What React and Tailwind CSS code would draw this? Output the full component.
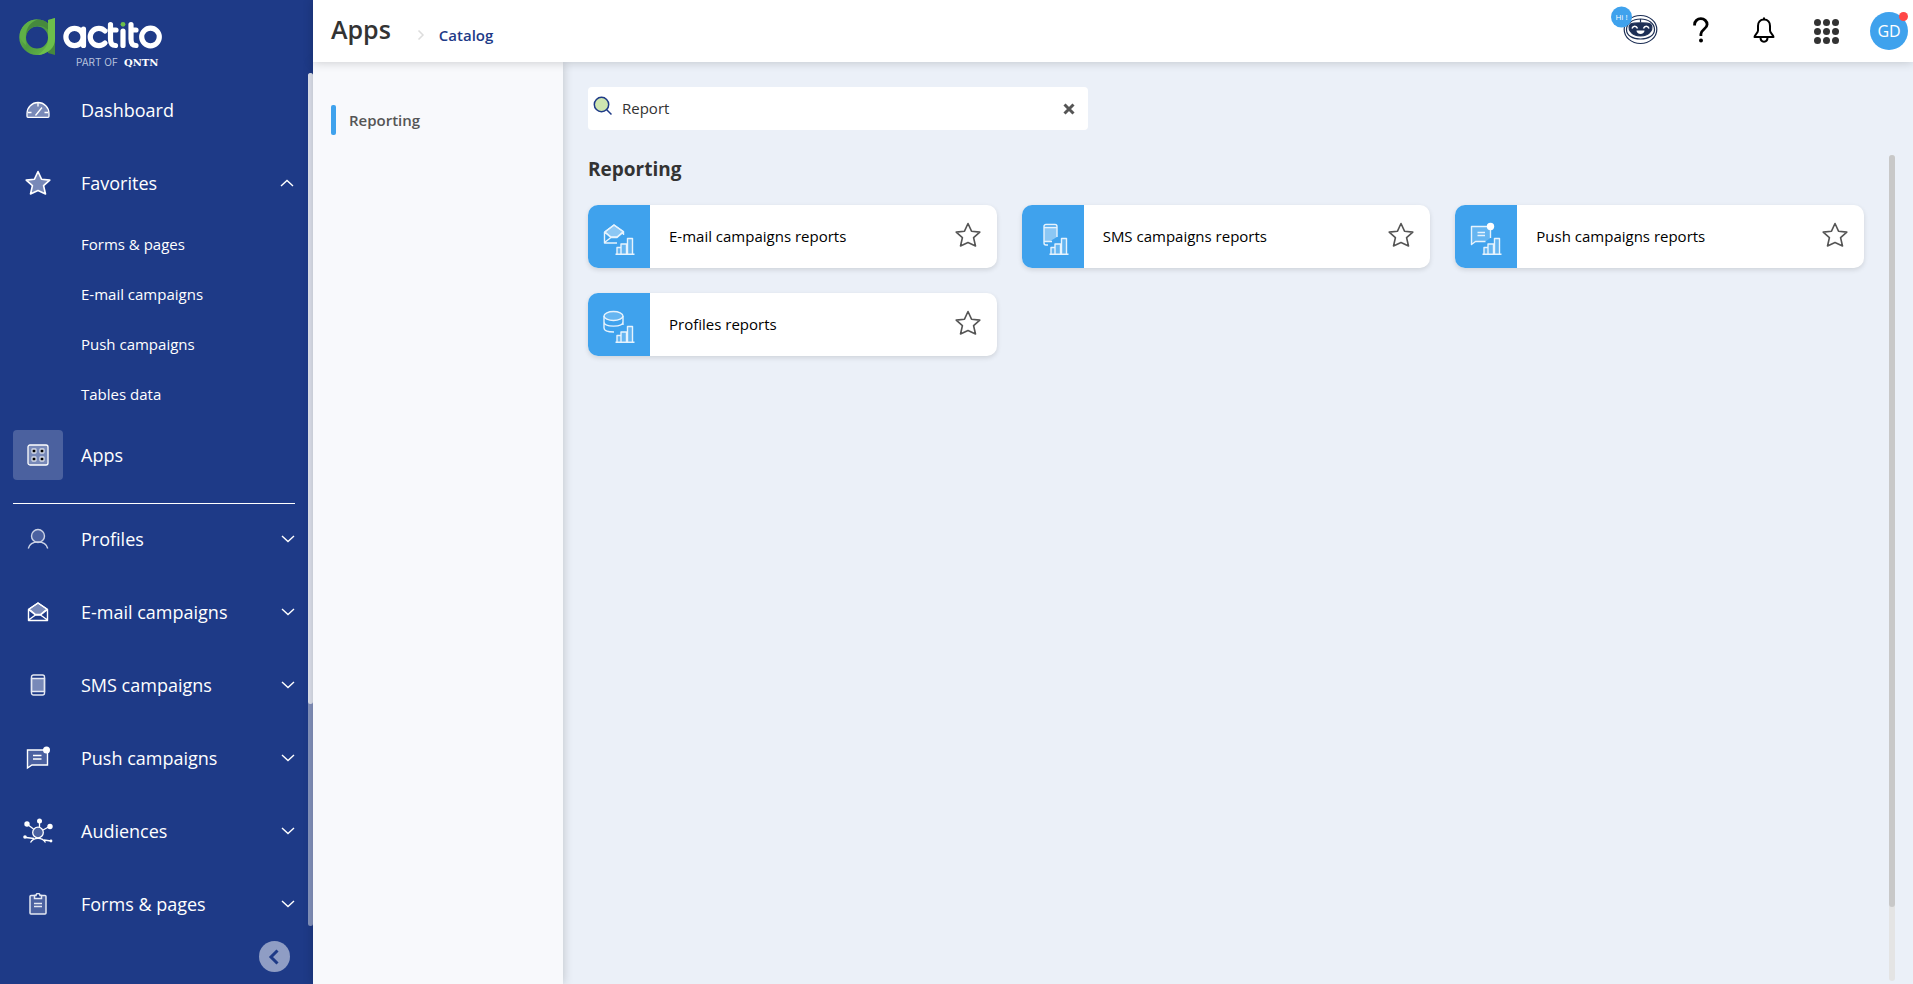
/**
 * App.jsx
 * Apps catalog screen: sidebar navigation, top bar, category list and report cards.
 */

import React, { useState } from "react";

const FAVORITES = ["Forms & pages", "E-mail campaigns", "Push campaigns", "Tables data"];

const SECTIONS = [
  { label: "Profiles", Icon: ProfileIcon },
  { label: "E-mail campaigns", Icon: MailIcon },
  { label: "SMS campaigns", Icon: PhoneIcon },
  { label: "Push campaigns", Icon: PushIcon },
  { label: "Audiences", Icon: AudienceIcon },
  { label: "Forms & pages", Icon: ClipboardIcon },
];

const REPORTS = [
  { label: "E-mail campaigns reports", Icon: MailReport },
  { label: "SMS campaigns reports", Icon: SmsReport },
  { label: "Push campaigns reports", Icon: PushReport },
  { label: "Profiles reports", Icon: ProfileReport },
];

export default function App() {
  return (
    <div className="flex h-screen overflow-hidden bg-[#ebf0f8] font-['Open_Sans','Noto_Sans',sans-serif] text-[#333333]">
      <Sidebar />
      <div className="flex min-w-0 flex-1 flex-col">
        <TopBar />
        <div className="flex min-h-0 flex-1">
          <CategoryPanel />
          <Catalog />
        </div>
      </div>
    </div>
  );
}

function Sidebar() {
  return (
    <aside className="flex w-[313px] shrink-0 flex-col bg-[#1e3a87] text-white">
      <a href="#home" aria-label="actito" className="block h-[73px] shrink-0 pt-4 pl-[18px]">
        <Logo />
      </a>

      <div className="flex min-h-0 flex-1">
        <nav className="flex min-w-0 flex-1 flex-col overflow-hidden pr-[13px]">
          <NavRow label="Dashboard" Icon={DashboardIcon} />
          <NavRow label="Favorites" Icon={NavStarIcon} chevron="up" />
          <ul>
            {FAVORITES.map((item) => (
              <li key={item}>
                <a href="#favorite" className="flex h-[50px] items-center pl-[81px] text-[15px]">
                  {item}
                </a>
              </li>
            ))}
          </ul>
          <a href="#apps" className="flex h-[72px] shrink-0 items-center pl-[13px] text-lg">
            <span className="mr-[18px] flex size-[50px] items-center justify-center rounded bg-white/20">
              <AppsIcon />
            </span>
            Apps
          </a>
          <hr className="mt-3 mb-[-2px] ml-[13px] shrink-0 border-white" />
          {SECTIONS.map(({ label, Icon }) => (
            <NavRow key={label} label={label} Icon={Icon} chevron="down" />
          ))}
        </nav>
        {/* Scroll track */}
        <div className="w-[5px] rounded-full bg-[#8493bd]">
          <div className="h-[74%] rounded-full bg-[#dfe3ee]" />
        </div>
      </div>

      <div className="flex h-[58px] shrink-0 justify-end pt-[15px] pr-[23px]">
        <button
          type="button"
          aria-label="Collapse menu"
          className="flex size-[31px] items-center justify-center rounded-full bg-[#8f9dc4]"
        >
          <svg width="16" height="16" viewBox="0 0 16 16" fill="none" stroke="#1e3a87" strokeWidth="3">
            <path d="M10.500 1.500 4 8l6.500 6.500" />
          </svg>
        </button>
      </div>
    </aside>
  );
}

function NavRow({ label, Icon, chevron }) {
  return (
    <button type="button" className="flex h-[73px] w-full shrink-0 items-center pl-[13px] text-left text-lg">
      <span className="mr-[18px] flex w-[50px] justify-center">
        <Icon />
      </span>
      <span className="flex-1">{label}</span>
      {chevron && (
        <svg
          width="14"
          height="8"
          viewBox="0 0 14 8"
          fill="none"
          stroke="white"
          strokeWidth="1.4"
          className={chevron === "up" ? "mr-px rotate-180" : ""}
        >
          <path d="m1 1 6 5.5L13 1" />
        </svg>
      )}
    </button>
  );
}

function TopBar() {
  return (
    <header className="z-10 flex h-[62px] shrink-0 items-center bg-white pr-[5px] pl-[18px] shadow-[0_0_10px_rgba(0,0,0,0.2)]">
      <h1 className="pb-0.5 text-[25px] font-semibold">Apps</h1>
      <svg width="8" height="12" viewBox="0 0 8 12" fill="none" stroke="#dddddd" strokeWidth="1.5" className="mt-2 ml-[26px]">
        <path d="m1.5 1.500 4.500 4.500-4.500 4.500" />
      </svg>
      <a href="#catalog" className="mt-2 ml-3.5 text-[15px] font-semibold text-[#1e3a87]">
        Catalog
      </a>

      <div className="ml-auto flex items-center">
        <button type="button" aria-label="Assistant" className="mb-2.5">
          <BotIcon />
        </button>
        <button type="button" aria-label="Help" className="mb-0.5 ml-[35px]">
          <svg width="16" height="26" viewBox="0 0 16 26" fill="none" stroke="black" strokeWidth="2.800">
            <path d="M1.600 8.500V7.500a6.200 5.800 0 0 1 12.500 0c0 4.500-6.200 5-6.200 9.500v2" />
            <circle cx="8" cy="23.500" r="2" fill="black" stroke="none" />
          </svg>
        </button>
        <button type="button" aria-label="Notifications" className="mb-0.5 ml-11">
          <svg width="22" height="26" viewBox="0 0 22 26" fill="none" stroke="black" strokeWidth="2" strokeLinejoin="round">
            <path d="M11 2.500c-4 0-6 3-6 6.500v4.500c0 2.500-3.500 4.500-3.500 6.500h19c0-2-3.500-4-3.500-6.500V9c0-3.500-2-6.500-6-6.500Z" />
            <path d="M11 .5v2.500M7.500 20.500c0 5.500 7 5.500 7 0" />
          </svg>
        </button>
        <button type="button" aria-label="Applications" className="ml-[39px] grid grid-cols-3 gap-0.5">
          {Array.from({ length: 9 }, (_, i) => (
            <span key={i} className="size-[7px] rounded-full bg-[#333333]" />
          ))}
        </button>
        <button
          type="button"
          className="relative ml-[31px] size-[38px] rounded-full bg-[#3fa2ed] text-base text-white"
        >
          GD
          <span className="absolute top-0 right-0 size-[9px] rounded-full bg-[#ff4747]" />
        </button>
      </div>
    </header>
  );
}

function CategoryPanel() {
  return (
    <aside className="w-[250px] shrink-0 bg-[#f8f9fc] pt-[43px] pl-[18px] shadow-[0_0_10px_rgba(0,0,0,0.2)]">
      <a href="#reporting" className="flex h-[30px] items-center text-[15px] font-semibold text-[#555555]">
        <span className="mr-[13px] h-full w-[5px] rounded-xs bg-[#3fa2ed]" />
        Reporting
      </a>
    </aside>
  );
}

function Catalog() {
  const [query, setQuery] = useState("Report");

  return (
    <main className="flex min-w-0 flex-1 flex-col pt-[25px] pr-[18px] pb-[3px] pl-[25px]">
      <label className="flex h-[43px] w-[500px] shrink-0 items-center rounded bg-white pr-[13px] pl-[5px]">
        <svg width="20" height="20" viewBox="0 0 20 20" className="mb-1.5">
          <circle cx="8.500" cy="8.500" r="7.200" fill="#cfe6b0" stroke="#1e3a87" strokeWidth="1.500" />
          <path d="m13.500 13.500 5 5" stroke="#1e3a87" strokeWidth="1.500" />
        </svg>
        <input
          type="text"
          aria-label="Search apps"
          value={query}
          onChange={(e) => setQuery(e.target.value)}
          className="ml-[9px] min-w-0 flex-1 text-[15px] outline-none"
        />
        <button type="button" aria-label="Clear search" onClick={() => setQuery("")}>
          <svg width="12" height="12" viewBox="0 0 12 12" stroke="#555555" strokeWidth="3">
            <path d="m1.500 1.500 9 9m0-9-9 9" />
          </svg>
        </button>
      </label>

      <div className="mt-[25px] flex min-h-0 flex-1">
        <section className="min-w-0 flex-1 pr-[25px]">
          <h2 className="text-[19px] leading-7 font-bold">Reporting</h2>
          <div className="mt-[22px] grid grid-cols-3 gap-[25px]">
            {REPORTS.map((report) => (
              <ReportCard key={report.label} {...report} />
            ))}
          </div>
        </section>
        {/* Scroll track */}
        <div className="w-1.5 rounded-full bg-[#e4e4e4]">
          <div className="h-[91%] rounded-full bg-[#c8c8c8]" />
        </div>
      </div>
    </main>
  );
}

function ReportCard({ label, Icon }) {
  return (
    <article className="flex h-[63px] items-center overflow-hidden rounded-[10px] bg-white pr-4 shadow-[0_2px_5px_rgba(0,0,0,0.12)]">
      <span className="flex h-full w-[62px] shrink-0 items-center justify-center bg-[#3fa2ed] pt-1">
        <Icon />
      </span>
      <a href="#report" className="ml-[19px] flex-1 truncate text-[15px] text-black">
        {label}
      </a>
      <button type="button" aria-label={`Add ${label} to favorites`} className="mb-1">
        <StarIcon fill="none" stroke="#555555" />
      </button>
    </article>
  );
}

/* ---------- Logo ---------- */

function Logo() {
  return (
    <svg width="146" height="52" viewBox="0 0 146 52">
      <defs>
        <linearGradient id="ring" x1="0" y1="0" x2="1" y2="1">
          <stop offset="0" stopColor="#6cbf4b" />
          <stop offset="0.5" stopColor="#4d9a41" />
          <stop offset="1" stopColor="#6cbf4b" />
        </linearGradient>
      </defs>
      <path d="m30 4 7-2v37l-7-2z" fill="#46893d" />
      <path
        fillRule="evenodd"
        fill="url(#ring)"
        d="M19 3.500a17.500 17.500 0 1 0 0 35.500 17.500 17.500 0 0 0 0-35.500Zm0 7a11 11 0 1 1 0 22 11 11 0 0 1 0-22Z"
      />
      <path d="M2 18C4 8 12 3 20 3.500 12 7 8 11 7.500 20L8 29C4 26 1.500 22 2 18z" fill="#5fb046" />
      <path d="M20 3.500c5 .3 8 2 10 4v6c-5-4-11-4.500-16-1.500C11 13.500 9 16 8 20c0-8 4-14 12-16.500z" fill="#46893d" />
      <path d="m30 4 7-2v21c0 9-7 15-17 16 6-5 10-9 10-16z" fill="#6cbf4b" />
      <g fill="none" stroke="white" strokeWidth="5.200" strokeLinecap="round">
        <circle cx="56.500" cy="21" r="8.600" />
        <path d="M65.500 13v16.500M87 15a8.600 8.600 0 1 0 0 12" />
        <path d="M92.500 8.500V23c0 4 1 6.500 5 6.500M92 14h6M105 15v14.500M113 8.500V23c0 4 1 6.500 5 6.500M113 14h5" />
        <circle cx="132.500" cy="21" r="8.800" />
      </g>
      <circle cx="105" cy="8.300" r="2.400" fill="#6cbf4b" />
      <text x="58" y="50" fontSize="10" fill="#b9c3de" fontFamily="Inter, sans-serif">
        PART OF
      </text>
      <text x="106" y="50" fontSize="10" fontWeight="700" fill="white" fontFamily="DejaVu Serif, serif">
        QNTN
      </text>
    </svg>
  );
}

/* ---------- Sidebar icons ---------- */

function DashboardIcon() {
  return (
    <svg width="24" height="18" viewBox="0 0 24 18" fill="none" stroke="white" strokeWidth="1.300">
      <path d="M2 16.300a1 1 0 0 1-1-1V12.500a11 11 0 0 1 22 0v2.800a1 1 0 0 1-1 1z" fill="#7889b8" />
      <path d="M12 2v3.500M2 11.500h3.500M18.500 11.500H22M9.500 14.500 16 6.500" />
    </svg>
  );
}

function StarIcon({ fill, stroke }) {
  return (
    <svg width="26" height="26" viewBox="0 0 26 26" fill={fill} stroke={stroke} strokeWidth="1.600" strokeLinejoin="round">
      <path d="m13 1.500 3.500 7.700 8.300.9-6.200 5.600 1.900 8.300-7.500-3.500L5.500 24l1.900-8.300-6.200-5.600 8.300-.9z" />
    </svg>
  );
}

function NavStarIcon() {
  return <StarIcon fill="#7889b8" stroke="white" />;
}

function AppsIcon() {
  return (
    <svg width="22" height="22" viewBox="0 0 22 22" fill="none" stroke="white" strokeWidth="1.300">
      <rect x="1" y="1" width="20" height="20" rx="2" fill="#7889b8" />
      <g fill="black" stroke="#d5dae8">
        <rect x="5" y="5" width="4" height="4" rx=".8" />
        <rect x="13" y="5" width="4" height="4" rx=".8" />
        <rect x="5" y="13" width="4" height="4" rx=".8" />
        <rect x="13" y="13" width="4" height="4" rx=".8" />
      </g>
    </svg>
  );
}

function ProfileIcon() {
  return (
    <svg width="22" height="22" viewBox="0 0 22 22" fill="none" stroke="#ccd3e6" strokeWidth="1.400">
      <circle cx="11" cy="8" r="6.500" fill="#4b61a0" />
      <path d="M1.300 20.500c1-4 4.500-6.500 9.700-6.500s8.700 2.500 9.700 6.500" />
    </svg>
  );
}

function MailIcon() {
  return (
    <svg width="22" height="20" viewBox="0 0 22 20" fill="none" stroke="white" strokeWidth="1.400" strokeLinejoin="round">
      <path d="m11 1 9 6-6.500 5.500h-5L2 7z" fill="#7889b8" />
      <path d="M1.500 7.500 11 1l9.500 6.500V18.500h-19zM1.500 7.500l7 5.500h5l7-5.500M1.500 18l7-5M20.500 18l-7-5" />
    </svg>
  );
}

function PhoneIcon() {
  return (
    <svg width="16" height="22" viewBox="0 0 16 22" fill="none" stroke="#e4e8f2" strokeWidth="1.400">
      <path d="M1.500 4.500h13v13h-13z" fill="#7889b8" />
      <rect x="1.500" y="1" width="13" height="20" rx="2" />
    </svg>
  );
}

function PushIcon() {
  return (
    <svg width="24" height="24" viewBox="0 0 24 24" fill="none" stroke="white" strokeWidth="1.400">
      <path d="M1.500 4h20v15H6l-4.500 3z" fill="#4b61a0" />
      <path d="M7 9.500h8.500M7 13h8.500" />
      <circle cx="20.500" cy="4" r="3.500" fill="white" stroke="none" />
    </svg>
  );
}

function AudienceIcon() {
  return (
    <svg width="30" height="26" viewBox="0 0 30 26" fill="none" stroke="white" strokeWidth="1.300">
      <path d="M4.500 6.500 10.500 11M16.500 4v5M25.500 9 20 12M3 19.500l8 1M28 23l-7-1M7.500 24.500c3-5.500 12-5.500 15 0" />
      <circle cx="15" cy="14.500" r="5.300" fill="#4b61a0" />
      <g fill="white" stroke="none">
        <circle cx="4" cy="6" r="2.700" />
        <circle cx="16.500" cy="3" r="2.500" />
        <circle cx="27" cy="8.500" r="2.700" />
        <circle cx="2" cy="19" r="1.800" />
        <circle cx="28" cy="23" r="1.400" />
      </g>
    </svg>
  );
}

function ClipboardIcon() {
  return (
    <svg width="18" height="22" viewBox="0 0 18 22" fill="none" stroke="#e4e8f2" strokeWidth="1.500">
      <rect x="1" y="2.500" width="16" height="18.500" rx="1" fill="#4b61a0" />
      <path d="M5.500 2.500h1.500a2 2 0 0 1 4 0h1.500V5.500h-7z" fill="#1e3a87" />
      <path d="M5 10.500h8M5 13.500h8" />
    </svg>
  );
}

/* ---------- Report icons ---------- */

function ReportIcon({ children }) {
  return (
    <svg width="32" height="34" viewBox="0 0 32 34" fill="none" stroke="#e6f3fd" strokeWidth="1.400" strokeLinejoin="round">
      {children}
      <path d="M12.500 32.300h19M14 32v-6.500h4V32M18 32V22h5.500v10M24.500 32V16.500h5V32" fill="#65b5f1" />
    </svg>
  );
}

function MailReport() {
  return (
    <ReportIcon>
      <path d="M11 3 20.500 9.500 14 15H8L2 10z" fill="#8cc7f4" />
      <path d="M1.500 10 11 3l9.500 7v3M1.500 10v11h12.500M1.500 10 8 15.500h6l6.500-5.500M1.500 20.500l6.500-5" />
    </ReportIcon>
  );
}

function SmsReport() {
  return (
    <ReportIcon>
      <path d="M7 6h13v9l-7.500 4.500H7z" fill="#8cc7f4" stroke="none" />
      <path d="M20 15V4.500a2 2 0 0 0-2-2H9a2 2 0 0 0-2 2V21a2 2 0 0 0 2 2h2M7 5.500h13M7 19.500h8" />
    </ReportIcon>
  );
}

function PushReport() {
  return (
    <ReportIcon>
      <path d="M20.500 5v11l-5 3.500H5.500l-4.500 3V5z" fill="#65b5f1" stroke="none" />
      <path d="M15.500 19.500h-10l-4 3V4.500h19V16M7.500 10.500H15M7.500 13.500H15" />
      <circle cx="20.500" cy="4.500" r="3.700" fill="white" stroke="none" />
    </ReportIcon>
  );
}

function ProfileReport() {
  return (
    <ReportIcon>
      <ellipse cx="10.500" cy="6" rx="9.500" ry="4.500" fill="#65b5f1" />
      <path d="M1 6v12c0 2.500 4.500 4 10 4M20 6v9M1 12c0 5.500 19 5.500 19 0" />
    </ReportIcon>
  );
}

function BotIcon() {
  return (
    <svg width="48" height="40" viewBox="0 0 48 40" fill="none" stroke="#1d2f55" strokeWidth="1.200">
      <ellipse cx="30.500" cy="23.500" rx="16.300" ry="14" />
      <path d="M30.500 13c8 0 14 4.500 14 10.500s-6 9.500-14 9.500-14-3.500-14-9.500S22.500 13 30.500 13Z" />
      <path d="M30.500 13v3.500" />
      <path d="M20.500 18c3-1.500 17-1.500 20 0 3.500 4 0 12-10 12s-13.500-8-10-12Z" fill="#1d2f55" />
      <path d="M22 22.500c1-3 4.500-3 5.500 0M33.500 22.500c1-3 4.500-3 5.500 0" stroke="white" strokeWidth="1.500" />
      <path d="M26.500 24.500h8c0 4.500-8 4.500-8 0Z" fill="white" stroke="none" />
      <circle cx="11.500" cy="11" r="10.500" fill="#3fa2ed" stroke="none" />
      <text x="11.500" y="14" textAnchor="middle" fontSize="8" fill="white" stroke="none">
        Hi !
      </text>
    </svg>
  );
}
